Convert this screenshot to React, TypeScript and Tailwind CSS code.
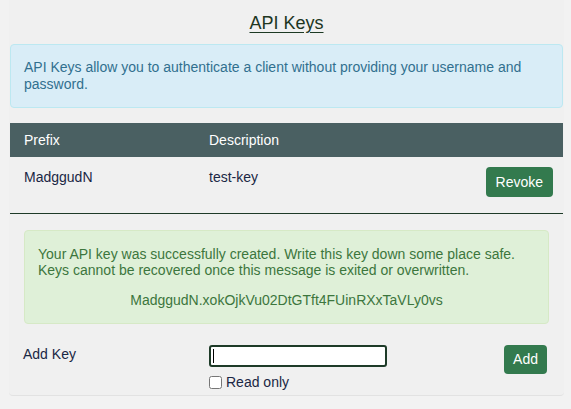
export default function App() {
  return (
    <div className="w-[571px] h-[409px] bg-[#f2f2f2] font-['Liberation_Sans',Arial,sans-serif] text-[14px] leading-[17px] overflow-hidden">
      <div className="ml-[9px] mr-[7px] bg-[#f0f0f0] rounded-b-[4px] border-b border-[#e2e2e2] pb-[5px]">
        <h1 className="pt-[11px] text-center text-[18px] leading-[24px] text-[#20361f] underline decoration-[#1d3a24] underline-offset-[3px]">
          API Keys
        </h1>

        <div className="mx-[1px] mt-[9px] rounded-[4px] border border-[#bce8f1] bg-[#d9edf7] px-[13px] py-[14px] text-[#31708f]">
          API Keys allow you to authenticate a client without providing your username and password.
        </div>

        {/* key table */}
        <div className="mx-[1px] mt-[15px]">
          <div className="flex h-[34px] items-center bg-[#4a6062] text-white">
            <div className="w-[199px] pl-[14px]">Prefix</div>
            <div>Description</div>
          </div>
          <div className="flex pt-[10px] pb-[16px] pr-[10px] border-b border-[#1e3b28] text-[#1a2744]">
            <div className="w-[199px] pl-[14px] leading-[20px]">MadggudN</div>
            <div className="flex-1 leading-[20px]">test-key</div>
            <button className="h-[30px] px-[10px] rounded-[4px] bg-[#337a4e] text-white text-[14px]">
              Revoke
            </button>
          </div>
        </div>

        <div className="ml-[15px] mr-[15px] mt-[16px] rounded-[4px] border border-[#d6e9c6] bg-[#dff0d8] px-[13px] py-[15px] text-[#3c763d] leading-[16px]">
          <p>
            Your API key was successfully created. Write this key down some place safe.
            <br />
            Keys cannot be recovered once this message is exited or overwritten.
          </p>
          <p className="mt-[14px] text-center">MadggudN.xokOjkVu02DtGTft4FUinRXxTaVLy0vs</p>
        </div>

        {/* add key form */}
        <div className="mt-[21px] flex pr-[17px] text-[#1a2744]">
          <div className="w-[200px] pl-[14px] pt-[1px] leading-[17px]">Add Key</div>
          <div className="flex-1">
            <div className="relative w-[178px]">
              <input
                type="text"
                className="block w-[178px] h-[22px] rounded-[3px] border-2 border-[#1e3b28] bg-white px-[2px] outline-none"
              />
              <span className="absolute left-[4px] top-[4px] h-[14px] w-[1px] bg-black" />
            </div>
            <label className="mt-[7px] flex items-center gap-[4px] leading-[16px]">
              <input type="checkbox" className="m-0 h-[13px] w-[13px]" />
              Read only
            </label>
          </div>
          <button className="h-[29px] px-[9px] rounded-[4px] bg-[#337a4e] text-white text-[14px]">
            Add
          </button>
        </div>
      </div>
    </div>
  );
}
